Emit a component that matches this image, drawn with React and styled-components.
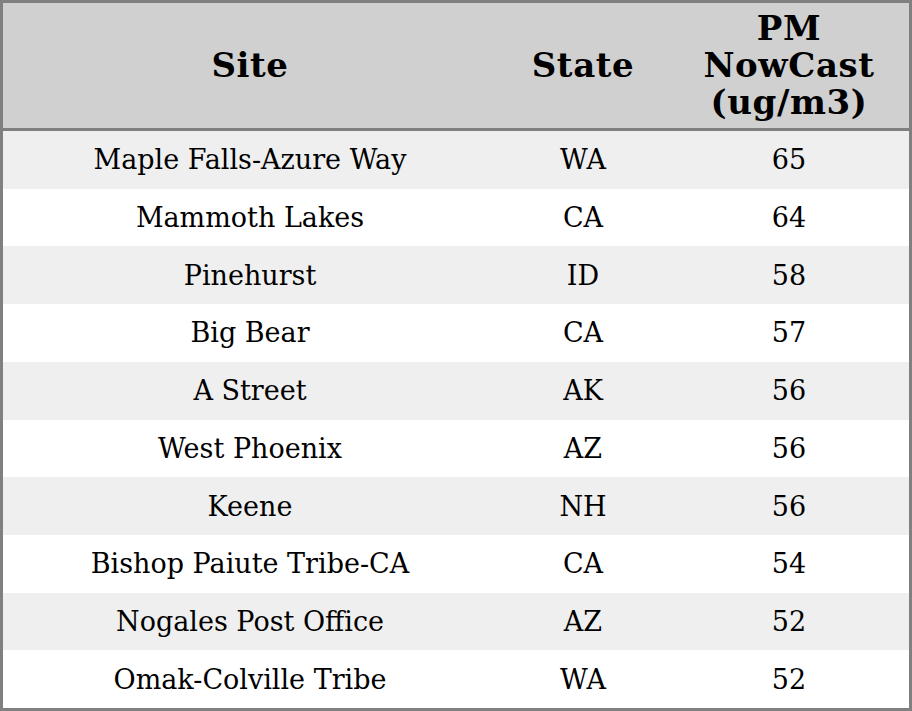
import React from 'react';
import styled, { createGlobalStyle } from 'styled-components';

const COLS = '494px 172px 1fr';

const GlobalStyle = createGlobalStyle`
  html, body {
    margin: 0;
    padding: 0;
    background: #fff;
  }
  body {
    font-family: "DejaVu Serif", "Liberation Serif", serif;
  }
`;

const Table = styled.div`
  box-sizing: border-box;
  width: 912px;
  height: 711px;
  border: 3px solid #808080;
  display: flex;
  flex-direction: column;
  color: #000;
`;

const HeaderRow = styled.div`
  display: grid;
  grid-template-columns: ${COLS};
  height: 125px;
  flex: none;
  background: #d0d0d0;
  border-bottom: 3px solid #808080;
`;

const HeadCell = styled.div`
  display: flex;
  align-items: center;
  justify-content: center;
  text-align: center;
  font-size: 34px;
  font-weight: bold;
  line-height: 37px;
  letter-spacing: 0.6px;
`;

const Body = styled.div`
  flex: 1;
  display: grid;
  grid-template-rows: repeat(10, 1fr);
`;

const Row = styled.div`
  display: grid;
  grid-template-columns: ${COLS};
  background: ${p => (p.$striped ? '#efefef' : '#ffffff')};
`;

const Cell = styled.div`
  display: flex;
  align-items: center;
  justify-content: center;
  font-size: 27px;
`;

const rows = [
  ['Maple Falls-Azure Way', 'WA', 65],
  ['Mammoth Lakes', 'CA', 64],
  ['Pinehurst', 'ID', 58],
  ['Big Bear', 'CA', 57],
  ['A Street', 'AK', 56],
  ['West Phoenix', 'AZ', 56],
  ['Keene', 'NH', 56],
  ['Bishop Paiute Tribe-CA', 'CA', 54],
  ['Nogales Post Office', 'AZ', 52],
  ['Omak-Colville Tribe', 'WA', 52],
];

const App = () => {
  return (
    <>
      <GlobalStyle />
      <Table>
        <HeaderRow>
          <HeadCell>Site</HeadCell>
          <HeadCell>State</HeadCell>
          <HeadCell>PM<br />NowCast<br />(ug/m3)</HeadCell>
        </HeaderRow>
        <Body>
          {rows.map(([site, state, pm], i) => (
            <Row key={site} $striped={i % 2 === 0}>
              <Cell>{site}</Cell>
              <Cell>{state}</Cell>
              <Cell>{pm}</Cell>
            </Row>
          ))}
        </Body>
      </Table>
    </>
  );
};

export default App;
